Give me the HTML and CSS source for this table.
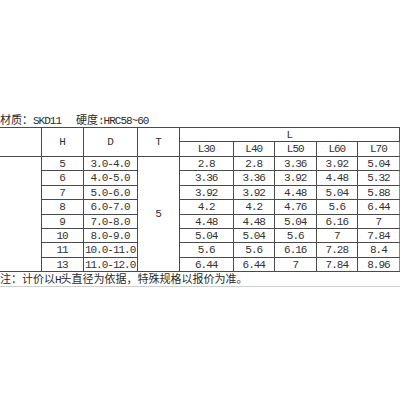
FILE: index.html
```html
<!DOCTYPE html>
<html>
<head>
<meta charset="utf-8">
<link rel="stylesheet" href="styles.css">
</head>
<body>
<div class="page">
  <div class="caption">材质：<span class="lat">SKD11</span><span class="gap"></span>硬度<span class="lat">:HRC58~60</span></div>
  <table class="spec">
    <colgroup>
      <col class="c41"><col class="c42"><col class="c54"><col class="c42">
      <col class="c54"><col class="c41"><col class="c42"><col class="c41"><col class="c42">
    </colgroup>
    <tr class="h1">
      <td rowspan="2" class="blank"></td>
      <td rowspan="2">H</td>
      <td rowspan="2">D</td>
      <td rowspan="2">T</td>
      <td colspan="5">L</td>
    </tr>
    <tr class="h2">
      <td>L30</td><td>L40</td><td>L50</td><td>L60</td><td class="last">L70</td>
    </tr>
    <tr class="r14">
      <td rowspan="8" class="blank"></td>
      <td>5</td><td>3.0-4.0</td><td rowspan="8">5</td>
      <td>2.8</td><td>2.8</td><td>3.36</td><td>3.92</td><td class="last">5.04</td>
    </tr>
    <tr class="r15"><td>6</td><td>4.0-5.0</td><td>3.36</td><td>3.36</td><td>3.92</td><td>4.48</td><td class="last">5.32</td></tr>
    <tr class="r14"><td>7</td><td>5.0-6.0</td><td>3.92</td><td>3.92</td><td>4.48</td><td>5.04</td><td class="last">5.88</td></tr>
    <tr class="r15"><td>8</td><td>6.0-7.0</td><td>4.2</td><td>4.2</td><td>4.76</td><td>5.6</td><td class="last">6.44</td></tr>
    <tr class="r14"><td>9</td><td>7.0-8.0</td><td>4.48</td><td>4.48</td><td>5.04</td><td>6.16</td><td class="last">7</td></tr>
    <tr class="r14"><td>10</td><td>8.0-9.0</td><td>5.04</td><td>5.04</td><td>5.6</td><td>7</td><td class="last">7.84</td></tr>
    <tr class="r15"><td>11</td><td>10.0-11.0</td><td>5.6</td><td>5.6</td><td>6.16</td><td>7.28</td><td class="last">8.4</td></tr>
    <tr class="r14"><td>13</td><td>11.0-12.0</td><td>6.44</td><td>6.44</td><td>7</td><td>7.84</td><td class="last">8.96</td></tr>
    <tr class="note">
      <td colspan="9">注：计价以<span class="lat">H</span>头直径为依据，特殊规格以报价为准。</td>
    </tr>
  </table>
</div>
</body>
</html>
```

FILE: styles.css
```css
html, body {
  margin: 0;
  padding: 0;
  background: #ffffff;
}

.page {
  padding-top: 112px;
  width: 400px;
  color: #2a2a2a;
  font-family: "Noto Sans CJK SC", "Liberation Mono", sans-serif;
  font-size: 11px;
}

.lat {
  font-family: "Liberation Mono", monospace;
  letter-spacing: -1px;
}

.caption {
  height: 15px;
  line-height: 15px;
  white-space: nowrap;
}

.caption .gap {
  display: inline-block;
  width: 15px;
}

.spec {
  border-collapse: collapse;
  table-layout: fixed;
  width: 400px;
}

.c41 { width: 41px; }
.c42 { width: 42px; }
.c54 { width: 54px; }

.spec td {
  border: 1px solid #4a4a4a;
  padding: 0;
  text-align: center;
  vertical-align: middle;
  font-family: "Liberation Mono", monospace;
  letter-spacing: -1px;
  font-size: 11px;
  line-height: 12px;
  color: #333333;
  white-space: nowrap;
  overflow: hidden;
}

.spec td.blank {
  border-left: none;
}

.spec td.last {
  border-right: 1px solid #8a8a8a;
}

.h1 td { height: 13px; }
.h2 td { height: 14px; }
.r14 td { height: 13px; }
.r15 td { height: 14px; }

.spec .note td {
  text-align: left;
  height: 13px;
  border-left: none;
  border-right: none;
  border-bottom: 1px solid #cfcfcf;
  font-family: "Noto Sans CJK SC", sans-serif;
  letter-spacing: 0;
  color: #2a2a2a;
}

.spec .note .lat {
  font-family: "Liberation Mono", monospace;
  letter-spacing: -1px;
}
```
